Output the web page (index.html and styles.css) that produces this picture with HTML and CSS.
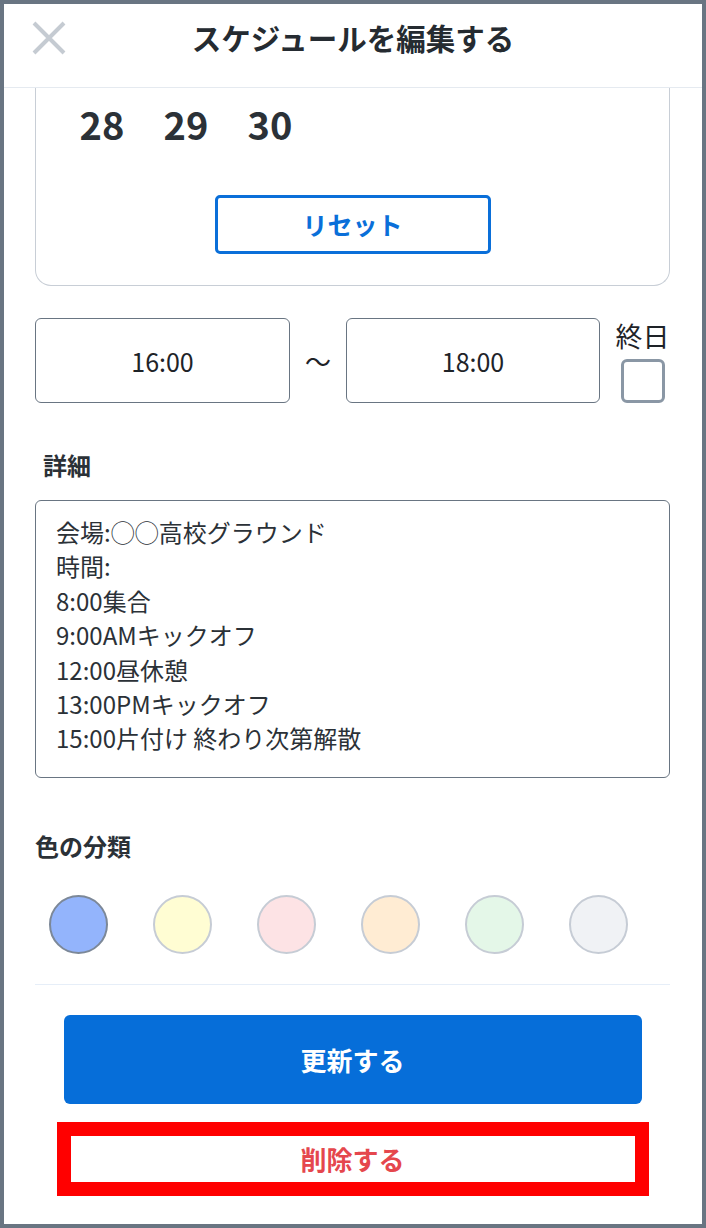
FILE: index.html
```html
<!DOCTYPE html>
<html lang="ja">
<head>
<meta charset="utf-8">
<link rel="stylesheet" href="styles.css">
</head>
<body>
<div class="frame">
  <header class="header">
    <button class="close" aria-label="閉じる">
      <svg width="34" height="34" viewBox="0 0 34 34"><path d="M2 2 L32 32 M32 2 L2 32" stroke="#c5cbd2" stroke-width="4" stroke-linecap="butt" fill="none"/></svg>
    </button>
    <h1 class="title">スケジュールを編集する</h1>
    <span></span>
  </header>
  <main class="content">
    <section class="card">
      <div class="days">
        <span class="day">28</span>
        <span class="day">29</span>
        <span class="day">30</span>
      </div>
      <div class="reset-wrap"><button class="reset">リセット</button></div>
    </section>

    <div class="time-row">
      <div class="time-box">16:00</div>
      <div class="tilde">～</div>
      <div class="time-box">18:00</div>
      <div class="allday">
        <span class="allday-label">終日</span>
        <span class="checkbox"></span>
      </div>
    </div>

    <h2 class="label detail-label">詳細</h2>
    <div class="textarea">
      <div>会場:◯◯高校グラウンド</div>
      <div>時間:</div>
      <div>8:00集合</div>
      <div>9:00AMキックオフ</div>
      <div>12:00昼休憩</div>
      <div>13:00PMキックオフ</div>
      <div>15:00片付け 終わり次第解散</div>
    </div>

    <h2 class="label color-label">色の分類</h2>
    <div class="colors">
      <span class="dot dot-blue"></span>
      <span class="dot dot-yellow"></span>
      <span class="dot dot-pink"></span>
      <span class="dot dot-orange"></span>
      <span class="dot dot-green"></span>
      <span class="dot dot-gray"></span>
    </div>
    <hr class="divider">
    <div class="actions">
      <button class="update">更新する</button>
      <div class="delete-frame"><button class="delete">削除する</button></div>
    </div>
  </main>
</div>
</body>
</html>
```
FILE: styles.css
```css
* { box-sizing: border-box; }
html, body { margin: 0; padding: 0; background: #fff; }
body {
  font-family: "Noto Sans CJK JP", "Noto Sans", sans-serif;
  color: #2b3137;
}
button { font-family: inherit; }
.frame {
  width: 706px;
  height: 1228px;
  border: 4px solid #697582;
  overflow: hidden;
  display: flex;
  flex-direction: column;
  background: #fff;
}
.header {
  height: 84px;
  border-bottom: 1px solid #e5eaf0;
  display: grid;
  grid-template-columns: 1fr auto 1fr;
  align-items: start;
  padding: 0 28px;
  flex: none;
}
.close {
  border: none;
  background: none;
  padding: 0;
  margin-top: 17px;
  width: 34px;
  height: 34px;
  justify-self: start;
}
.close svg { display: block; }
.title {
  margin: 15px 0 0;
  font-size: 29.5px;
  line-height: 36px;
  font-weight: 700;
  color: #252b31;
  letter-spacing: 0;
}
.content {
  flex: 1;
  padding: 0 32px 0 31px;
  display: flex;
  flex-direction: column;
}
.card {
  border: 1.5px solid #c8ced6;
  border-top: none;
  border-radius: 0 0 16px 16px;
  padding: 13px 24px 31px;
}
.days {
  display: grid;
  grid-template-columns: repeat(7, 84px);
}
.day {
  text-align: center;
  font-size: 38px;
  line-height: 46px;
  font-weight: 700;
  color: #2b3137;
}
.reset-wrap {
  display: flex;
  justify-content: center;
  margin-top: 48px;
}
.reset {
  width: 276px;
  height: 59px;
  border: 3px solid #0a6fd9;
  border-radius: 5px;
  background: #fff;
  color: #0a6fd9;
  font-size: 25px;
  font-weight: 700;
  line-height: 1;
}
.time-row {
  margin-top: 32px;
  display: grid;
  grid-template-columns: 255px 56px 254px 1fr;
  align-items: start;
}
.time-box {
  height: 85px;
  border: 1.5px solid #697582;
  border-radius: 6px;
  display: flex;
  align-items: center;
  justify-content: center;
  font-size: 25px;
  color: #1e2328;
}
.tilde {
  height: 85px;
  display: flex;
  align-items: center;
  justify-content: center;
  font-size: 26px;
  color: #1e2328;
}
.allday {
  display: flex;
  flex-direction: column;
  align-items: center;
  padding-left: 12px;
  margin-top: 3px;
}
.allday-label {
  font-size: 27px;
  line-height: 30px;
  color: #1e2328;
  margin-left: 3px;
}
.checkbox {
  margin-top: 8px;
  width: 44px;
  height: 44px;
  border: 3px solid #8a97a5;
  border-radius: 6px;
  margin-left: 4px;
}
.label {
  margin: 0;
  font-size: 24px;
  line-height: 32px;
  font-weight: 700;
  color: #2b3137;
}
.detail-label {
  margin-top: 46px;
  padding-left: 8px;
}
.textarea {
  margin-top: 19px;
  height: 278px;
  border: 1.5px solid #697582;
  border-radius: 6px;
  padding: 14px 20px 0;
  font-size: 24px;
  line-height: 34.4px;
  color: #2b3137;
}
.color-label {
  margin-top: 52px;
}
.colors {
  margin-top: 33px;
  display: flex;
  gap: 45px;
  padding-left: 14px;
}
.dot {
  width: 59px;
  height: 59px;
  border-radius: 50%;
  border: 2px solid #c6ccd5;
}
.dot-blue { background: #93b4fc; border-color: #7c8898; }
.dot-yellow { background: #fffdd3; }
.dot-pink { background: #fde3e5; }
.dot-orange { background: #ffecd3; }
.dot-green { background: #e4f7e8; }
.dot-gray { background: #f0f2f5; }
.divider {
  margin: 30px 0 0;
  border: none;
  border-top: 1.5px solid #e6eef8;
  height: 0;
}
.actions {
  display: flex;
  flex-direction: column;
  align-items: center;
  margin-top: 30px;
}
.update {
  width: 578px;
  height: 89px;
  border: none;
  border-radius: 6px;
  background: #066ed9;
  color: #fff;
  font-size: 26px;
  font-weight: 700;
}
.delete-frame {
  margin-top: 18px;
  width: 592px;
  border: 14px solid #ff0000;
}
.delete {
  display: block;
  width: 100%;
  height: 46px;
  border: none;
  background: #fff;
  color: #e5474d;
  font-size: 26px;
  font-weight: 700;
  line-height: 1;
  padding: 0;
}
```
